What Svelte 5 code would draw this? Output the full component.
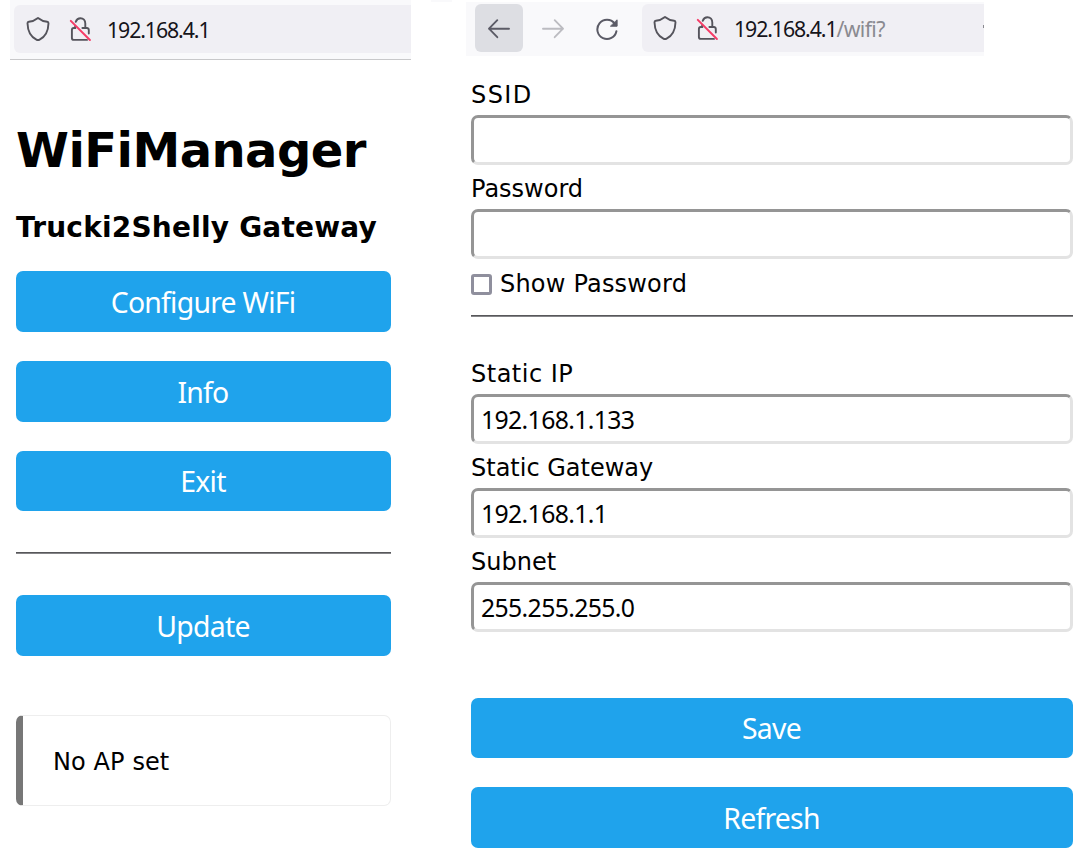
<script>
  const actions = ['Configure WiFi', 'Info', 'Exit'];
  let credentials = $state([
    { id: 'ssid', label: 'SSID', value: '' },
    { id: 'password', label: 'Password', value: '' }
  ]);
  let network = $state([
    { id: 'ip', label: 'Static IP', value: '192.168.1.133' },
    { id: 'gateway', label: 'Static Gateway', value: '192.168.1.1' },
    { id: 'subnet', label: 'Subnet', value: '255.255.255.0' }
  ]);
</script>

{#snippet siteIcons()}
  <svg class="shield" width="24" height="26" viewBox="0 0 24 26" fill="none" stroke="#55545c" stroke-width="1.9" stroke-linejoin="round">
    <path d="M12 1.9C9.4 4 6 5.4 2.8 5.7C1.9 5.8 1.5 6.4 1.5 7.2C1.7 14.9 4.7 20.7 10.4 23.6Q12 24.5 13.6 23.6C19.3 20.7 22.3 14.9 22.5 7.2C22.5 6.4 22.1 5.8 21.2 5.7C18 5.4 14.6 4 12 1.9Z" />
  </svg>
  <svg class="lock" width="24" height="26" viewBox="0 0 24 26" fill="none" stroke="#55545c" stroke-width="1.9" stroke-linecap="round">
    <path d="M6.7 5.8C7.6 3.5 9.2 2.2 11.4 2.2C14.4 2.2 16.3 4.5 16.3 7.4V12H17.8Q19.8 12.2 19.8 14V17.6" />
    <path d="M6.2 9.9V12H4.8Q2.9 12 2.9 14V21.9Q2.9 23.9 4.9 23.9H18M13.4 12H16" />
    <path d="M1.8 4.9L20.9 24" stroke="#f53c67" stroke-width="2" />
  </svg>
{/snippet}

{#snippet field(item)}
  <div class="field">
    <label class={item.id} for={item.id}>{item.label}</label>
    <input id={item.id} bind:value={item.value} spellcheck="false" />
  </div>
{/snippet}

<div class="page">
  <section class="portal">
    <header class="chrome plain">
      <div class="url">
        {@render siteIcons()}
        <span class="address">192.168.4.1</span>
      </div>
    </header>
    <main class="menu">
      <h1>WiFiManager</h1>
      <h3>Trucki2Shelly Gateway</h3>
      <div class="actions">
        {#each actions as action}
          <button>{action}</button>
        {/each}
      </div>
      <hr />
      <button>Update</button>
      <div class="message">No AP set</div>
    </main>
  </section>

  <div class="gutter"><i></i></div>

  <section class="setup">
    <header class="chrome navbar">
      <div class="nav back">
        <svg width="24" height="24" viewBox="0 0 24 24" fill="none" stroke="#5b5b66" stroke-width="1.9" stroke-linecap="round" stroke-linejoin="round"><path d="M22 12.7H2M10.3 4.2L2 12.7L10.3 21.2" /></svg>
      </div>
      <div class="nav forward">
        <svg width="24" height="24" viewBox="0 0 24 24" fill="none" stroke="#bcbcc1" stroke-width="1.9" stroke-linecap="round" stroke-linejoin="round"><path d="M2 12.7H22M13.7 4.2L22 12.7L13.7 21.2" /></svg>
      </div>
      <div class="nav reload">
        <svg width="24" height="26" viewBox="0 0 24 26" fill="none" stroke="#5b5b66" stroke-width="2" stroke-linecap="round"><path d="M19.6 8.6A9.6 9.6 0 1 0 21.4 16.2" /><path d="M22.1 5.2V11.2H15.8Z" fill="#5b5b66" stroke-width="1" stroke-linejoin="round" /></svg>
      </div>
      <div class="url">
        {@render siteIcons()}
        <span class="address">192.168.4.1<span class="path">/wifi?</span></span>
        <i class="edge"></i>
      </div>
    </header>
    <main class="form">
      {#each credentials as item}
        {@render field(item)}
      {/each}
      <label class="check"><input type="checkbox" /><span>Show Password</span></label>
      <hr />
      {#each network as item}
        {@render field(item)}
      {/each}
      <div class="submit">
        <button>Save</button>
        <button>Refresh</button>
      </div>
    </main>
  </section>
</div>

<style>
  :global(body) { margin: 0; background: #fff; overflow: hidden; }
  * { box-sizing: border-box; }
  .page {
    display: flex;
    width: 1088px;
    height: 855px;
    overflow: hidden;
    padding-left: 10px;
    background: #fff;
    color: #000;
    font-family: 'DejaVu Sans', sans-serif;
    font-size: 24px;
  }
  svg { display: block; flex: none; }
  .portal { width: 401px; }
  .chrome { display: flex; background: #f9f9fb; }
  .plain { height: 60px; padding: 5px 0 6px 4px; border-bottom: 1px solid #c8c8ca; }
  .url {
    display: flex;
    flex: 1;
    align-items: center;
    height: 48px;
    padding-left: 12px;
    border-radius: 6px 0 0 6px;
    background: #f0eff4;
  }
  .navbar .url { padding-left: 11px; }
  .lock { margin-left: 19px; }
  .address {
    margin-left: 14px;
    padding-top: 2px;
    font: 21.3px/30px 'Noto Sans', sans-serif;
    letter-spacing: -1.1px;
    color: #15141a;
    white-space: nowrap;
  }
  .path { color: #8a8a90; letter-spacing: -0.65px; }
  .edge { width: 1px; height: 3px; margin: 0 0 4px auto; background: #8a8a90; }
  .menu { width: 381px; padding: 61px 0 0 6px; }
  h1 { margin: 0; font-size: 48px; line-height: 58px; letter-spacing: -0.55px; white-space: nowrap; }
  h3 { margin: 32px 0 26px; font-size: 28px; line-height: 34px; letter-spacing: 0.2px; white-space: nowrap; }
  .actions { display: grid; gap: 29px; }
  button {
    display: block;
    width: 100%;
    height: 61px;
    padding: 0 1px 0 0;
    border: 0;
    border-radius: 7px;
    background: #1fa3ec;
    color: #fff;
    font: 28.4px/60px 'Noto Sans', sans-serif;
    letter-spacing: -0.75px;
  }
  .menu button { padding-top: 1px; }
  .actions button:last-child { height: 60px; padding-top: 0; }
  hr { height: 2px; margin: 0; border: 0; border-top: 1px solid #57575a; background: #858588; }
  .menu hr { margin: 41px 0; }
  .message {
    height: 91px;
    margin-top: 59px;
    padding-left: 30px;
    border: 1px solid #eee;
    border-left: 7px solid #777;
    border-radius: 7px;
    line-height: 92px;
    letter-spacing: 0.1px;
  }
  .gutter { width: 55px; padding-left: 20px; }
  .gutter i { display: block; width: 21px; height: 2px; background: #f9f9fb; }
  .setup { width: 612px; padding-top: 2px; }
  .navbar { width: 518px; height: 54px; padding: 2px 0 4px 9px; }
  .nav { display: grid; place-items: center; width: 48px; height: 48px; margin-right: 6px; border-radius: 6px; }
  .back { background: #dddee3; }
  .reload { margin-right: 11px; }
  .form { padding: 24px 5px 0; }
  .field { display: grid; gap: 5px; margin-bottom: 9px; line-height: 30px; }
  .ssid { letter-spacing: 1.4px; }
  .ip { letter-spacing: 0.5px; }
  .field input {
    width: 100%;
    height: 50px;
    padding: 0 0 0 7px;
    border: 3px solid;
    border-color: #959595 #e3e3e3 #e3e3e3 #959595;
    border-radius: 7px;
    outline: 0;
    background: #fff;
    color: #000;
    font: 24.8px/40px 'Noto Sans', sans-serif;
    letter-spacing: -0.65px;
  }
  .check { display: flex; align-items: center; gap: 8px; height: 30px; margin: 10px 0 16px; line-height: 30px; letter-spacing: 0.2px; }
  .check input { appearance: none; width: 21px; height: 21px; margin: 0; border: 3px solid #8f8f9d; border-radius: 3px; background: #fff; }
  .form hr { margin-bottom: 42px; }
  .submit { display: grid; gap: 29px; margin-top: 66px; }
  .submit button:first-child { height: 60px; }
  .submit button:last-child { padding-top: 1px; }
</style>
